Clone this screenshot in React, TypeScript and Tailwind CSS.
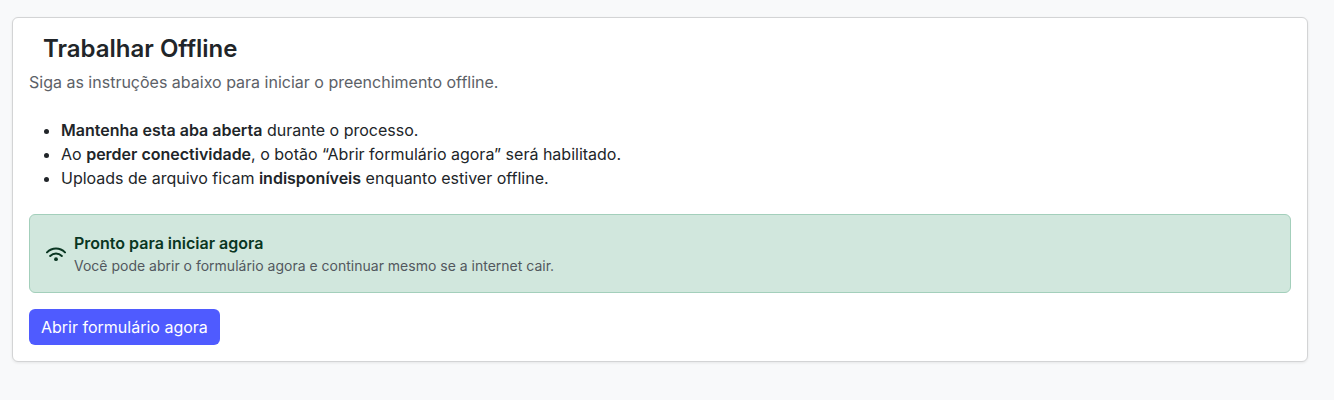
export default function App() {
  return (
    <div className="min-h-[400px] bg-[#f8f9fa] pl-3 pr-[26px] pt-[17px] font-['Inter',sans-serif] text-[#212529]">
      <div className="rounded-md border border-[#d3d4d5] bg-white px-4 pt-[13px] pb-4 shadow-[0_1px_3px_rgba(0,0,0,0.08)]">
        <h2 className="pl-[14px] text-2xl leading-[36px] font-semibold">Trabalhar Offline</h2>
        <p className="mt-[3px] text-base leading-6 text-[#5c6167]">Siga as instruções abaixo para iniciar o preenchimento offline.</p>
        <ul className="mt-[24px] list-disc pl-8 text-base leading-6">
          <li><b className="font-semibold">Mantenha esta aba aberta</b> durante o processo.</li>
          <li>Ao <b className="font-semibold">perder conectividade</b>, o botão “Abrir formulário agora” será habilitado.</li>
          <li>Uploads de arquivo ficam <b className="font-semibold">indisponíveis</b> enquanto estiver offline.</li>
        </ul>
        <div className="mt-[24px] flex h-[79px] items-center gap-2 rounded-md border border-[#a3cfbb] bg-[#d1e7dd] px-4">
          <svg width="20" height="20" viewBox="0 0 20 20" fill="none" stroke="#0a3622" strokeWidth="2" strokeLinecap="round" className="mt-[3px] shrink-0">
            <path d="M1 7.4C3.4 5 6.6 3.6 10 3.6s6.6 1.4 9 3.8" />
            <path d="M4.2 11C5.8 9.4 7.8 8.5 10 8.5s4.2.9 5.8 2.5" />
            <circle cx="10" cy="14.2" r="1.9" fill="#0a3622" stroke="none" />
          </svg>
          <div>
            <div className="text-base leading-6 font-semibold text-[#0a3622]">Pronto para iniciar agora</div>
            <div className="text-sm leading-[21px] text-[#52585e]">Você pode abrir o formulário agora e continuar mesmo se a internet cair.</div>
          </div>
        </div>
        <button className="mt-4 block h-9 rounded-md bg-[#4f5bff] px-3 text-base leading-6 text-white">Abrir formulário agora</button>
      </div>
    </div>
  );
}
